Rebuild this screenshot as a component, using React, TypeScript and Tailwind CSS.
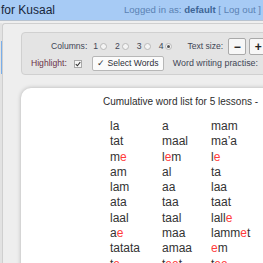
import React from 'react';

type Word = { parts: [string, boolean][] };

// each word is split into plain / highlighted (red) pieces
const w = (...parts: [string, boolean][]): Word => ({ parts });
const p = (s: string): [string, boolean] => [s, false];
const r = (s: string): [string, boolean] => [s, true];

const rows: Word[][] = [
  [w(p('la')), w(p('a')), w(p('mam'))],
  [w(p('tat')), w(p('maal')), w(p('ma’a'))],
  [w(p('m'), r('e')), w(p('l'), r('e'), p('m')), w(p('l'), r('e'))],
  [w(p('am')), w(p('al')), w(p('ta'))],
  [w(p('lam')), w(p('aa')), w(p('laa'))],
  [w(p('ata')), w(p('taa')), w(p('taat'))],
  [w(p('laal')), w(p('taal')), w(p('lall'), r('e'))],
  [w(p('a'), r('e')), w(p('maa')), w(p('lamm'), r('e'), p('t'))],
  [w(p('tatata')), w(p('amaa')), w(r('e'), p('m'))],
  [w(p('t'), r('e')), w(p('t'), r('ee'), p('t')), w(p('t'), r('ee'))],
];

function Radio({ checked }: { checked?: boolean }) {
  return (
    <span className="inline-flex w-[7px] h-[7px] rounded-full border border-[#b9b9b9] bg-[#f4f4f4] items-center justify-center">
      {checked && <span className="w-[3px] h-[3px] rounded-full bg-[#555]" />}
    </span>
  );
}

function ColOption({ n, checked }: { n: string; checked?: boolean }) {
  return (
    <span className="flex items-center gap-[2px]">
      <span>{n}</span>
      <Radio checked={checked} />
    </span>
  );
}

export default function App() {
  return (
    <div
      className="w-[263px] h-[263px] overflow-hidden bg-[#efefef] flex flex-col"
      style={{ fontFamily: '"Liberation Sans", Arial, sans-serif' }}
    >
      {/* Header */}
      <div className="h-[21px] shrink-0 bg-[#a7cbf5] border-b border-[#b9c3cf] flex items-center justify-between pr-[2px]">
        <span className="text-[12px] text-[#17263a] pl-[1px] whitespace-nowrap">for Kusaal</span>
        <span className="text-[9.6px] text-[#5b82b3] whitespace-nowrap">
          Logged in as: <b className="text-[#3d6596]">default</b> [ Log out ]
        </span>
      </div>

      <div className="flex flex-1 min-h-0 pt-[2px]">
        {/* left edge */}
        <div className="w-[2px] shrink-0 bg-[#e2e2e2] flex flex-col">
          <div className="h-[18px]" />
          <div className="ml-[1px] w-[2px] h-[33px] bg-[#79aeea]" />
        </div>

        <div className="flex-1 min-w-0 border-l border-t border-[#cfcfcf] rounded-tl-[3px] bg-[#eeeeee] flex flex-col">
          {/* Control panel */}
          <div className="ml-[18px] mt-[8px] w-[300px] h-[43px] shrink-0 bg-[#e4e4e4] border border-[#d0d0d0] rounded-[4px] flex flex-col text-[8.6px] text-[#3f4656] whitespace-nowrap">
            <div className="h-[17px] mt-[5px] flex items-center pl-[29px]">
              <span className="mr-[6px]">Columns:</span>
              <span className="flex items-center gap-[8px]">
                <ColOption n="1" />
                <ColOption n="2" />
                <ColOption n="3" />
                <ColOption n="4" checked />
              </span>
              <span className="ml-[15px]">Text size:</span>
              <span className="ml-[5px] w-[18px] h-[17px] border border-[#a9a9a9] bg-[#f7f7f7] rounded-[2px] flex items-center justify-center text-[12px] text-[#222] font-bold leading-none">
                −
              </span>
              <span className="ml-[3px] w-[18px] h-[17px] border border-[#a9a9a9] bg-[#f7f7f7] rounded-[2px] flex items-center justify-center text-[12px] text-[#222] font-bold leading-none">
                +
              </span>
            </div>
            <div className="h-[15px] mt-[1px] flex items-center pl-[9px]">
              <span className="text-[#6a3348]">Highlight:</span>
              <span className="ml-[7px] w-[8px] h-[8px] border border-[#a8a8a8] bg-[#f6f6f6] flex items-center justify-center">
                <svg viewBox="0 0 8 8" className="w-[6px] h-[6px]">
                  <path d="M1 4.2 L3.2 6.3 L7 1.5" fill="none" stroke="#333" strokeWidth="1.4" />
                </svg>
              </span>
              <span className="ml-[10px] w-[72px] h-[15px] border border-[#b7b7b7] bg-[#fbfbfb] rounded-[2px] flex items-center justify-center text-[#2b2f38]">
                ✓ Select Words
              </span>
              <span className="ml-[9px] text-[8.9px]">Word writing practise:</span>
            </div>
          </div>

          {/* Word list card */}
          <div className="ml-[18px] mt-[13px] w-[320px] flex-1 bg-white rounded-tl-[10px] shadow-[0_0_4px_rgba(0,0,0,0.25)] text-[#333]">
            <div className="pt-[7px] pl-[82px] text-[10px] leading-[14px] text-[#2d2d2d] whitespace-nowrap">
              Cumulative word list for 5 lessons - 
            </div>
            <div className="mt-[10px] pl-[89px] grid grid-cols-[52px_49px_60px] text-[12px] leading-[15.3px]">
              {rows.map((row, i) =>
                row.map((word, j) => (
                  <span key={`${i}-${j}`} className="whitespace-nowrap">
                    {word.parts.map(([s, red], k) => (
                      <span key={k} className={red ? 'text-[#ff3b3b]' : ''}>
                        {s}
                      </span>
                    ))}
                  </span>
                ))
              )}
            </div>
          </div>
        </div>
      </div>
    </div>
  );
}
